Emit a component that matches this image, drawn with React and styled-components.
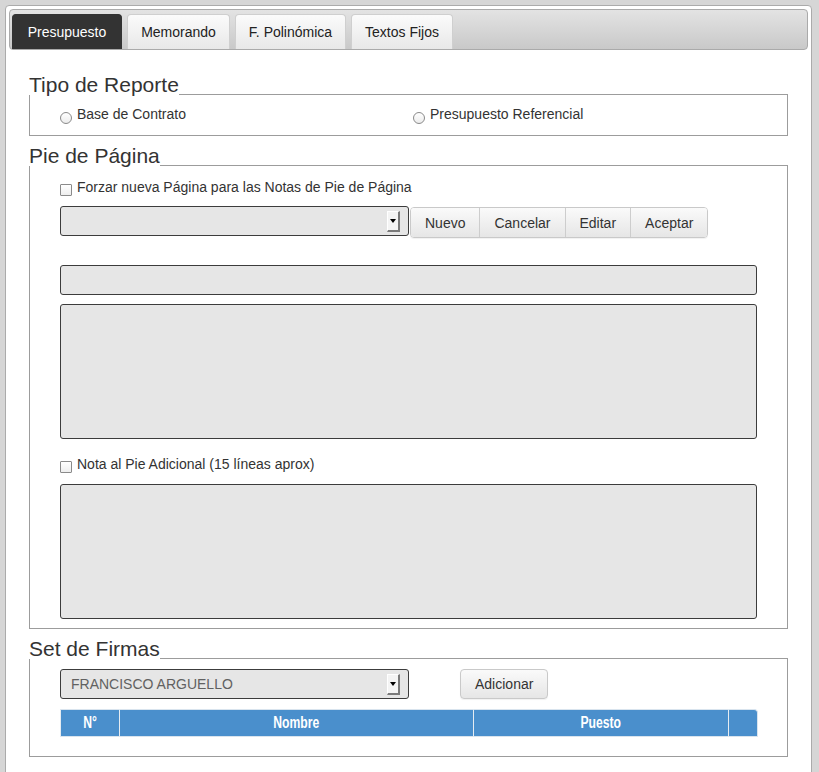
import React from "react";
import styled, { createGlobalStyle } from "styled-components";

// global
const GlobalStyle = createGlobalStyle`
  html, body {
    margin: 0;
    padding: 0;
    overflow: hidden;
    background: #d6d6d6;
    font-family: "Liberation Sans", Arial, sans-serif;
    font-size: 14px;
    color: #333;
  }
  * { box-sizing: border-box; }
`;

// frame
const Page = styled.div`
  padding: 5px 7px 0 5px;
`;
const Panel = styled.div`
  background: #fff;
  border: 1px solid #ababab;
  border-radius: 4px;
  padding: 3px 3px 40px 3px;
`;
const TabBar = styled.div`
  display: flex;
  align-items: flex-end;
  gap: 5px;
  height: 41px;
  padding: 4px 2px 0 2px;
  border: 1px solid #aaa;
  border-radius: 4px;
  background: linear-gradient(#e3e3e3, #c9c9c9);
`;
const Tab = styled.div`
  width: ${(p) => p.w}px;
  height: 35px;
  display: flex;
  align-items: center;
  justify-content: center;
  border: 1px solid ${(p) => (p.active ? "#333" : "#cfcfcf")};
  border-bottom: none;
  border-radius: 4px 4px 0 0;
  background: ${(p) =>
    p.active ? "#333" : "linear-gradient(#fbfbfb, #e8e8e8)"};
  color: ${(p) => (p.active ? "#fff" : "#222")};
  font-size: 14px;
`;
const Content = styled.div`
  margin: 25px 20px 0 20px;
`;

// fieldset look-alike
const Section = styled.section`
  margin-top: ${(p) => (p.first ? "0" : "10px")};
`;
const Legend = styled.div`
  display: flex;
  align-items: flex-end;
  height: 20px;
`;
const LegendText = styled.span`
  font-size: 21px;
  line-height: 20px;
  color: #333;
  white-space: nowrap;
`;
const LegendLine = styled.span`
  flex: 1;
  border-bottom: 1px solid #9c9c9c;
`;
const Box = styled.div`
  border: 1px solid #9c9c9c;
  border-top: none;
  padding: ${(p) => p.pad || "10px 29px"};
  display: flex;
  flex-direction: column;
`;

// radios and checks
const RadioRow = styled.div`
  display: grid;
  grid-template-columns: 353px 1fr;
`;
const Option = styled.label`
  display: flex;
  align-items: flex-start;
  gap: 5px;
  height: 16px;
  line-height: 16px;
  font-size: 14px;
  color: #333;
  margin-top: ${(p) => p.mt || "0"};
`;
const Radio = styled.span`
  width: 12px;
  height: 12px;
  margin-top: 6px;
  border-radius: 50%;
  border: 1px solid #8a8a8a;
  background: linear-gradient(#fff, #ececec);
  flex: none;
`;
const Check = styled.span`
  width: 12px;
  height: 12px;
  margin-top: 5px;
  border: 1px solid #8a8a8a;
  border-radius: 1px;
  background: linear-gradient(#fff, #eee);
  flex: none;
`;

// inputs
const Row = styled.div`
  display: flex;
  align-items: flex-start;
  height: 30px;
  gap: ${(p) => p.gap || "1px"};
  margin-top: ${(p) => p.mt || "0"};
`;
const Select = styled.div`
  width: 349px;
  height: 30px;
  display: flex;
  align-items: center;
  justify-content: space-between;
  padding: 0 8px 0 10px;
  background: #e6e6e6;
  border: 1px solid #3c3c3c;
  border-radius: 3px;
  font-size: 14px;
  color: #616161;
`;
const DropBtn = styled.span`
  width: 13px;
  height: 21px;
  display: flex;
  align-items: center;
  justify-content: center;
  background: #f4f4f4;
  border-top: 1px solid #fff;
  border-left: 1px solid #fff;
  border-right: 2px solid #7a7a7a;
  border-bottom: 2px solid #7a7a7a;
  &::after {
    content: "";
    border-left: 3px solid transparent;
    border-right: 3px solid transparent;
    border-top: 4px solid #000;
  }
`;
const BtnGroup = styled.div`
  display: flex;
  height: 31px;
  margin-top: 1px;
  border: 1px solid #c9c9c9;
  border-radius: 4px;
  overflow: hidden;
  box-shadow: 0 1px 1px rgba(0, 0, 0, 0.06);
`;
const GroupBtn = styled.button`
  font-family: inherit;
  font-size: 14px;
  color: #333;
  padding: 0 14px;
  border: none;
  border-left: ${(p) => (p.first ? "none" : "1px solid #cdcdcd")};
  background: linear-gradient(#fafafa, #e6e6e6);
`;
const Button = styled.button`
  height: 30px;
  font-family: inherit;
  font-size: 14px;
  color: #333;
  padding: 0 14px;
  border: 1px solid #c9c9c9;
  border-radius: 4px;
  background: linear-gradient(#fafafa, #e6e6e6);
  box-shadow: 0 1px 1px rgba(0, 0, 0, 0.06);
`;
const Field = styled.div`
  height: ${(p) => p.h || "30px"};
  margin-top: ${(p) => p.mt || "0"};
  background: #e6e6e6;
  border: 1px solid #3c3c3c;
  border-radius: 3px;
`;

// table
const Table = styled.table`
  width: 698px;
  margin-top: 10px;
  border-collapse: separate;
  border-spacing: 0;
  table-layout: fixed;
`;
const Th = styled.th`
  height: 28px;
  padding: 0;
  background: #4a8fcc;
  color: #fff;
  font-family: "Liberation Sans", Arial, sans-serif;
  font-weight: bold;
  font-size: 16px;
  text-align: center;
  border-top: 1px solid #d9e4ee;
  border-bottom: 1px solid #d9e4ee;
  border-left: 1px solid #e6ecf2;
  &:last-child {
    border-right: 1px solid #d9e4ee;
    border-top-right-radius: 4px;
  }
`;
// the header face is a condensed one
const ThLabel = styled.span`
  display: inline-block;
  transform: scaleX(0.76);
`;

const tabs = [
  { label: "Presupuesto", w: 110 },
  { label: "Memorando", w: 103 },
  { label: "F. Polinómica", w: 111 },
  { label: "Textos Fijos", w: 102 },
];
const actions = ["Nuevo", "Cancelar", "Editar", "Aceptar"];

export default function App() {
  return (
    <>
      <GlobalStyle />
      <Page>
        <Panel>
          <TabBar>
            {tabs.map((t, i) => (
              <Tab key={t.label} w={t.w} active={i === 0}>
                {t.label}
              </Tab>
            ))}
          </TabBar>
          <Content>
            <Section first>
              <Legend>
                <LegendText>Tipo de Reporte</LegendText>
                <LegendLine />
              </Legend>
              <Box pad="11px 30px 13px 30px">
                <RadioRow>
                  <Option>
                    <Radio />
                    Base de Contrato
                  </Option>
                  <Option>
                    <Radio />
                    Presupuesto Referencial
                  </Option>
                </RadioRow>
              </Box>
            </Section>

            <Section>
              <Legend>
                <LegendText>Pie de Página</LegendText>
                <LegendLine />
              </Legend>
              <Box pad="13px 30px 9px 30px">
                <Option>
                  <Check />
                  Forzar nueva Página para las Notas de Pie de Página
                </Option>
                <Row mt="11px">
                  <Select>
                    <span />
                    <DropBtn />
                  </Select>
                  <BtnGroup>
                    {actions.map((a, i) => (
                      <GroupBtn key={a} first={i === 0}>
                        {a}
                      </GroupBtn>
                    ))}
                  </BtnGroup>
                </Row>
                <Field mt="29px" />
                <Field mt="9px" h="135px" />
                <Option mt="17px">
                  <Check />
                  Nota al Pie Adicional (15 líneas aprox)
                </Option>
                <Field mt="12px" h="135px" />
              </Box>
            </Section>

            <Section>
              <Legend>
                <LegendText>Set de Firmas</LegendText>
                <LegendLine />
              </Legend>
              <Box pad="10px 30px 19px 30px">
                <Row gap="51px">
                  <Select>
                    <span>FRANCISCO ARGUELLO</span>
                    <DropBtn />
                  </Select>
                  <Button>Adicionar</Button>
                </Row>
                <Table>
                  <colgroup>
                    <col style={{ width: 59 }} />
                    <col style={{ width: 354 }} />
                    <col style={{ width: 255 }} />
                    <col style={{ width: 30 }} />
                  </colgroup>
                  <thead>
                    <tr>
                      <Th>
                        <ThLabel>N°</ThLabel>
                      </Th>
                      <Th>
                        <ThLabel>Nombre</ThLabel>
                      </Th>
                      <Th>
                        <ThLabel>Puesto</ThLabel>
                      </Th>
                      <Th />
                    </tr>
                  </thead>
                </Table>
              </Box>
            </Section>
          </Content>
        </Panel>
      </Page>
    </>
  );
}
